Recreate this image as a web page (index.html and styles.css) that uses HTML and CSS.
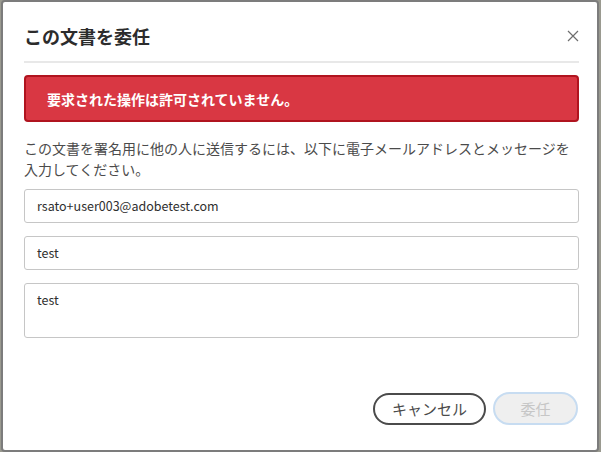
FILE: index.html
```html
<!DOCTYPE html>
<html lang="ja">
<head>
<meta charset="utf-8">
<link rel="stylesheet" href="styles.css">
</head>
<body>
<div class="dialog">
  <div class="header">
    <h1 class="title">この文書を委任</h1>
    <button class="close" aria-label="閉じる">
      <svg width="12" height="12" viewBox="0 0 12 12"><path d="M1 1L11 11M11 1L1 11" stroke="#6e6e6e" stroke-width="1.2" fill="none"/></svg>
    </button>
  </div>
  <div class="alert">要求された操作は許可されていません。</div>
  <p class="desc">この文書を署名用に他の人に送信するには、以下に電子メールアドレスとメッセージを入力してください。</p>
  <div class="fields">
    <div class="field">rsato+user003@adobetest.com</div>
    <div class="field">test</div>
    <div class="field area">test</div>
  </div>
  <div class="actions">
    <button class="btn cancel">キャンセル</button>
    <button class="btn primary" disabled>委任</button>
  </div>
</div>
</body>
</html>
```
FILE: styles.css
```css
html, body {
  margin: 0;
  padding: 0;
  background: #9a9a90;
  width: 601px;
  height: 452px;
  overflow: hidden;
}
body {
  font-family: "Noto Sans CJK JP", "Noto Sans", sans-serif;
  color: #4b4b4b;
}
.dialog {
  box-sizing: border-box;
  margin-left: 1px;
  width: 598px;
  height: 452px;
  background: #fff;
  border: 2px solid #7c7c7c;
  border-radius: 4px;
  padding: 0 18px 0 21px;
  display: flex;
  flex-direction: column;
}
.header {
  display: flex;
  align-items: center;
  justify-content: space-between;
  height: 24px;
  margin-top: 22px;
  padding-bottom: 13px;
  border-bottom: 2px solid #e8e8e8;
}
.title {
  margin: 0;
  font-size: 18px;
  line-height: 24px;
  font-weight: 700;
  color: #2c2c2c;
}
.close {
  border: 0;
  background: none;
  padding: 0;
  width: 12px;
  height: 12px;
  display: flex;
}
.alert {
  margin-top: 12px;
  background: #d93743;
  border: 2px solid #b0141f;
  border-radius: 4px;
  padding: 11.5px 20px 11.5px 21px;
  font-size: 14px;
  line-height: 20px;
  font-weight: 700;
  color: #fff;
}
.desc {
  margin: 16px 0 0;
  font-size: 14px;
  line-height: 21px;
  color: #4b4b4b;
}
.fields {
  margin-top: 9px;
  display: flex;
  flex-direction: column;
  gap: 13px;
}
.field {
  box-sizing: border-box;
  height: 34px;
  border: 1px solid #c6c6c6;
  border-radius: 3px;
  padding: 0 12px;
  font-size: 12.5px;
  line-height: 32px;
  color: #2f2f2f;
}
.field.area {
  height: 55px;
  line-height: 20px;
  padding-top: 6px;
}
.actions {
  margin-top: 54px;
  display: flex;
  justify-content: flex-end;
  align-items: center;
  gap: 7px;
  padding-right: 1px;
}
.btn {
  font-family: inherit;
  font-size: 15px;
  box-sizing: border-box;
  border-radius: 17px;
  padding: 0;
  line-height: 20px;
}
.cancel {
  width: 113px;
  height: 32px;
  border: 2px solid #4b4b4b;
  background: #fff;
  color: #4b4b4b;
}
.primary {
  width: 85px;
  height: 33px;
  border: 2px solid #c7dcf1;
  background: #efefef;
  color: #c6c6c6;
}
```
